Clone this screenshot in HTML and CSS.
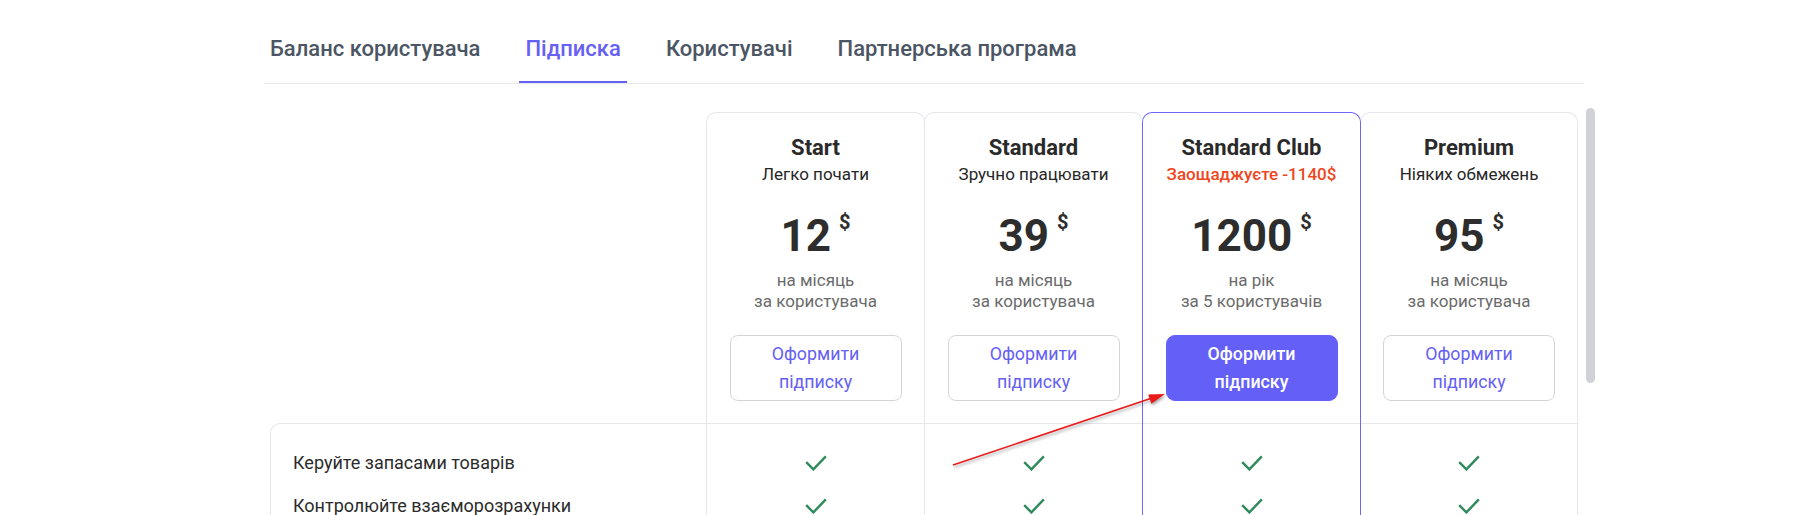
FILE: index.html
```html
<!DOCTYPE html>
<html lang="uk">
<head>
<meta charset="utf-8">
<title>Підписка</title>
<link rel="stylesheet" href="styles.css">
</head>
<body>
<div class="page">
  <nav class="tabs">
    <a class="tab">Баланс користувача</a>
    <a class="tab active">Підписка</a>
    <a class="tab">Користувачі</a>
    <a class="tab">Партнерська програма</a>
  </nav>

  <section class="pricing">
    <div class="plans">
      <div class="labels">
        <div class="labels-head"></div>
        <div class="labels-body">
          <div class="row">Керуйте запасами товарів</div>
          <div class="row">Контролюйте взаєморозрахунки</div>
        </div>
      </div>

      <div class="plan">
        <div class="plan-head">
          <h3 class="plan-name">Start</h3>
          <p class="plan-sub">Легко почати</p>
          <div class="price"><span class="amount">12</span><span class="cur">$</span></div>
          <p class="period">на місяць<br>за користувача</p>
          <button class="btn">Оформити<br>підписку</button>
        </div>
        <div class="plan-body">
          <div class="row"><svg class="check" viewBox="0 0 22 16"><path d="M1.2 7.2 L8.4 14.4 L20.8 1.4"/></svg></div>
          <div class="row"><svg class="check" viewBox="0 0 22 16"><path d="M1.2 7.2 L8.4 14.4 L20.8 1.4"/></svg></div>
        </div>
      </div>

      <div class="plan">
        <div class="plan-head">
          <h3 class="plan-name">Standard</h3>
          <p class="plan-sub">Зручно працювати</p>
          <div class="price"><span class="amount">39</span><span class="cur">$</span></div>
          <p class="period">на місяць<br>за користувача</p>
          <button class="btn">Оформити<br>підписку</button>
        </div>
        <div class="plan-body">
          <div class="row"><svg class="check" viewBox="0 0 22 16"><path d="M1.2 7.2 L8.4 14.4 L20.8 1.4"/></svg></div>
          <div class="row"><svg class="check" viewBox="0 0 22 16"><path d="M1.2 7.2 L8.4 14.4 L20.8 1.4"/></svg></div>
        </div>
      </div>

      <div class="plan featured">
        <div class="plan-head">
          <h3 class="plan-name">Standard Club</h3>
          <p class="plan-sub save">Заощаджуєте -1140$</p>
          <div class="price"><span class="amount">1200</span><span class="cur">$</span></div>
          <p class="period">на рік<br>за 5 користувачів</p>
          <button class="btn btn-primary">Оформити<br>підписку</button>
        </div>
        <div class="plan-body">
          <div class="row"><svg class="check" viewBox="0 0 22 16"><path d="M1.2 7.2 L8.4 14.4 L20.8 1.4"/></svg></div>
          <div class="row"><svg class="check" viewBox="0 0 22 16"><path d="M1.2 7.2 L8.4 14.4 L20.8 1.4"/></svg></div>
        </div>
      </div>

      <div class="plan">
        <div class="plan-head">
          <h3 class="plan-name">Premium</h3>
          <p class="plan-sub">Ніяких обмежень</p>
          <div class="price"><span class="amount">95</span><span class="cur">$</span></div>
          <p class="period">на місяць<br>за користувача</p>
          <button class="btn">Оформити<br>підписку</button>
        </div>
        <div class="plan-body">
          <div class="row"><svg class="check" viewBox="0 0 22 16"><path d="M1.2 7.2 L8.4 14.4 L20.8 1.4"/></svg></div>
          <div class="row"><svg class="check" viewBox="0 0 22 16"><path d="M1.2 7.2 L8.4 14.4 L20.8 1.4"/></svg></div>
        </div>
      </div>
    </div>
    <div class="scrollbar"></div>
  </section>

  <svg class="annotation" viewBox="0 0 1804 515" width="1804" height="515">
    <g class="arrow">
      <line x1="953" y1="465" x2="1152" y2="398"/>
      <polygon points="1165,394 1151.4,403.8 1148.2,394.4"/>
    </g>
  </svg>
</div>
</body>
</html>
```

FILE: styles.css
```css
* {
  box-sizing: border-box;
}

html, body {
  margin: 0;
  padding: 0;
  background: #ffffff;
}

body {
  font-family: Roboto, "Noto Sans", "Liberation Sans", sans-serif;
  color: #2b2b2b;
  overflow: hidden;
}

.page {
  padding-left: 264px;
  width: 1804px;
  height: 515px;
  overflow: hidden;
}

/* Tabs */
.tabs {
  display: flex;
  gap: 33px;
  width: 1320px;
  border-bottom: 1px solid #e5e7eb;
}

.tab {
  display: block;
  padding: 36px 6px 19px;
  font-size: 22px;
  line-height: 26px;
  font-weight: 500;
  color: #4b5563;
  border-bottom: 2px solid transparent;
  text-decoration: none;
  white-space: nowrap;
}

.tab.active {
  color: #6760f5;
  border-bottom-color: #6760f5;
}

/* Pricing */
.pricing {
  display: flex;
  align-items: flex-start;
  gap: 8px;
  padding-top: 24px;
  padding-left: 6px;
}

.plans {
  display: flex;
  align-items: flex-start;
  margin-top: 4px;
}

.labels {
  width: 436px;
  flex: 0 0 436px;
}

.labels-head {
  height: 311px;
}

.labels-body {
  border-top: 1px solid #e5e7eb;
  border-left: 1px solid #e5e7eb;
  border-top-left-radius: 10px;
  padding: 17px 0 80px 22px;
  font-size: 18px;
  color: #2b2b2b;
}

.row {
  height: 43px;
  display: flex;
  align-items: center;
}

.plan {
  flex: 0 0 219px;
  width: 219px;
  border: 1px solid #e5e7eb;
  border-bottom: none;
  border-radius: 10px 10px 0 0;
  background: #ffffff;
}

.plan + .plan {
  margin-left: -1px;
}

.plan:last-child {
  flex-basis: 218px;
  width: 218px;
}

.plan.featured {
  position: relative;
  z-index: 1;
  border-color: #6d66f6;
}

.plan-head {
  height: 311px;
  border-bottom: 1px solid #e5e7eb;
  padding: 22px 12px 0;
  text-align: center;
}

.plan-name {
  margin: 0;
  font-size: 22px;
  line-height: 26px;
  font-weight: 700;
  color: #2a2a2a;
}

.plan-sub {
  margin: 2px 0 0;
  font-size: 17px;
  line-height: 22px;
  color: #262626;
}

.plan-sub.save {
  color: #f0461c;
  font-weight: 500;
}

.price {
  display: flex;
  justify-content: center;
  align-items: flex-start;
  margin-top: 25px;
}

.amount {
  font-size: 44px;
  line-height: 52px;
  font-weight: 700;
  color: #2d2d2d;
}

.cur {
  font-size: 20px;
  line-height: 24px;
  font-weight: 700;
  color: #2d2d2d;
  margin-left: 8px;
  margin-top: 0;
}

.period {
  margin: 8px 0 0;
  font-size: 17px;
  line-height: 21px;
  color: #6b6b6b;
}

.btn {
  display: block;
  width: 172px;
  margin: 23px auto 0;
  padding: 4px 0;
  border: 1px solid #d4d4d8;
  border-radius: 8px;
  background: #ffffff;
  color: #6560f4;
  font-family: Roboto, "Noto Sans", "Liberation Sans", sans-serif;
  font-size: 17.8px;
  line-height: 28px;
  font-weight: 400;
}

.btn-primary {
  background: #645ff6;
  border-color: #645ff6;
  color: #ffffff;
  border-radius: 9px;
  font-weight: 500;
}

.plan-body {
  padding: 17px 0 80px;
}

.plan-body .row {
  justify-content: center;
}

.check {
  width: 22px;
  height: 16px;
  fill: none;
  stroke: #2f8a5c;
  stroke-width: 2.4;
  stroke-linecap: butt;
  stroke-linejoin: miter;
}

.scrollbar {
  width: 9px;
  height: 275px;
  border-radius: 5px;
  background: #d0d2d7;
}

/* Annotation overlay */
.annotation {
  position: absolute;
  left: 0;
  top: 0;
  pointer-events: none;
  z-index: 5;
}

.arrow {
  filter: drop-shadow(1px 2px 1.5px rgba(0, 0, 0, 0.35));
}

.arrow line {
  stroke: #ea1a1a;
  stroke-width: 1.5;
}

.arrow polygon {
  fill: #ea1a1a;
}
```
